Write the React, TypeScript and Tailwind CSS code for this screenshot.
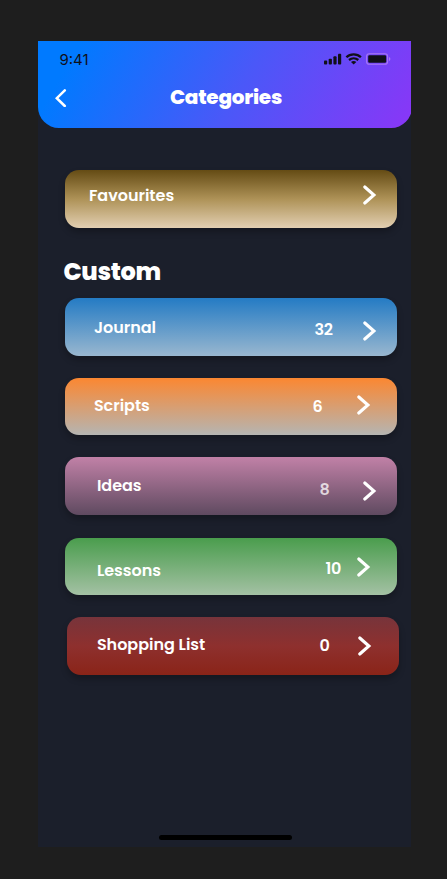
import React from "react";

type Category = {
  name: string;
  count?: string;
  row: string;
  label: string;
  countClass: string;
  chevron: string;
};

const favourites: Category = {
  name: "Favourites",
  row: "mt-[42.5px] ml-[27px] from-[#644b14] via-[#ae9257] to-[#e2cfb2]",
  label: "ml-[23.5px] mt-[14px] w-[226.5px]",
  countClass: "w-[48px]",
  chevron: "mt-[15px]",
};

const categories: Category[] = [
  {
    name: "Journal",
    count: "32",
    row: "ml-[27px] from-[#247bc4] to-[#99b7cf]",
    label: "ml-[28.5px] mt-[18px] w-[220.5px]",
    countClass: "mt-[20px] w-[49px]",
    chevron: "mt-[22.5px]",
  },
  {
    name: "Scripts",
    count: "6",
    row: "ml-[27px] mt-[22px] from-[#fb8731] to-[#b5b5b2]",
    label: "ml-[28.5px] mt-[16px] w-[218.5px]",
    countClass: "mt-[17px] w-[45px]",
    chevron: "mt-[17.5px]",
  },
  {
    name: "Ideas",
    count: "8",
    row: "ml-[27px] mt-[22px] from-[#c181a7] to-[#5f4a60]",
    label: "ml-[31.5px] mt-[17px] w-[222.5px]",
    countClass: "mt-[21px] w-[44px] text-white/75",
    chevron: "mt-[23.5px]",
  },
  {
    name: "Lessons",
    count: "10",
    row: "ml-[27px] mt-[23px] from-[#4a9d4d] to-[#a4c1a4]",
    label: "ml-[31.5px] mt-[21px] w-[228.5px]",
    countClass: "mt-[19.5px] w-[32px]",
    chevron: "mt-[19.5px]",
  },
  {
    name: "Shopping List",
    count: "0",
    row: "ml-[29px] mt-[22px] from-[#77343b] via-[#8e302e] to-[#8a2418]",
    label: "ml-[29.5px] mt-[16px] w-[222.5px]",
    countClass: "mt-[17px] w-[39px]",
    chevron: "mt-[19px]",
  },
];

function CategoryRow({ item }: { item: Category }) {
  return (
    <button
      className={`flex h-[57.5px] w-[331.5px] shrink-0 items-start rounded-[14px] bg-linear-to-b/srgb text-left shadow-[0_4px_6px_rgba(0,0,0,0.25)] ${item.row}`}
    >
      <span className={`shrink-0 whitespace-nowrap text-[16px] leading-6 font-semibold tracking-[-0.02px] ${item.label}`}>
        {item.name}
      </span>
      <span className={`shrink-0 text-[16px] leading-6 font-semibold tracking-[-0.2px] ${item.countClass}`}>
        {item.count}
      </span>
      <svg
        className={`h-5 w-[14px] shrink-0 ${item.chevron}`}
        viewBox="0 0 14 20"
        fill="none"
        stroke="white"
        strokeWidth="3.1"
        strokeLinecap="round"
        strokeLinejoin="miter"
      >
        <path d="M1.8 2 L10.9 10 L1.8 18" />
      </svg>
    </button>
  );
}

function StatusIcons() {
  return (
    <svg className="h-3 w-[67px]" viewBox="0 0 67 12" fill="#101018">
      <rect x="0" y="7.6" width="3.2" height="3.8" rx="0.9" />
      <rect x="4.7" y="5.7" width="3.2" height="5.7" rx="0.9" />
      <rect x="9.4" y="3.3" width="3.2" height="8.1" rx="0.9" />
      <rect x="14" y="0.8" width="3.2" height="10.6" rx="0.9" />
      <g fill="none" stroke="#101018" strokeWidth="2.3">
        <path d="M22.4 4.2 C26.3 0.4 33 0.4 36.9 4.2" />
        <path d="M25 7 C27.7 4.7 31.6 4.7 34.3 7" />
      </g>
      <path d="M27 9 C28.5 7.7 30.8 7.7 32.3 9 L29.65 11.6 Z" />
      <rect x="42.6" y="0.7" width="21" height="10.5" rx="2.8" fill="none" stroke="#a878f4" strokeWidth="1.1" />
      <rect x="44.2" y="2.2" width="18" height="7.6" rx="1.3" />
      <path d="M65 4 Q66.4 4.5 66.4 6 Q66.4 7.5 65 8 Z" fill="#a878f4" />
    </svg>
  );
}

export default function App() {
  return (
    <div className="flex h-[879px] w-[447px] items-start overflow-hidden bg-[#1e1e1e] pt-[41px] pl-[38.4px] font-['Poppins','Inter',sans-serif] text-white">
      <main className="flex h-[806px] w-[372.5px] flex-col overflow-hidden bg-[#1b1f2b]">
        <header className="h-[86.7px] w-[374px] shrink-0 rounded-b-[21px] bg-[linear-gradient(120deg,#007aff_10%,#4a58f8_54%,#8638f7_97%)]">
          <div className="flex h-9 items-start justify-between pl-[21px] pr-[21px]">
            <time className="mt-[10px] font-['Inter',sans-serif] text-[15px] leading-[18px] text-[#101018]">9:41</time>
            <div className="mt-3 flex">
              <StatusIcons />
            </div>
          </div>
          <div className="flex h-10 items-center">
            <button className="ml-[16.5px] flex w-3" aria-label="Back">
              <svg className="h-[19px] w-3" viewBox="0 0 12 19" fill="none" stroke="white" strokeWidth="2.5" strokeLinecap="round">
                <path d="M9.8 2.4 L1.8 10.2 L9.8 18" />
              </svg>
            </button>
            <h1 className="ml-[103px] text-[20px] leading-[30px] font-extrabold tracking-[-0.25px]">Categories</h1>
          </div>
        </header>
        <CategoryRow item={favourites} />
        <h2 className="mt-[26px] mb-[8.5px] ml-[25px] text-[24px] leading-9 font-extrabold tracking-[-0.3px]">Custom</h2>
        <section className="flex flex-col">
          {categories.map((item) => (
            <CategoryRow key={item.name} item={item} />
          ))}
        </section>
        <div className="mt-[160px] ml-[120.5px] h-[5px] w-[133px] shrink-0 rounded-full bg-black" />
      </main>
    </div>
  );
}
